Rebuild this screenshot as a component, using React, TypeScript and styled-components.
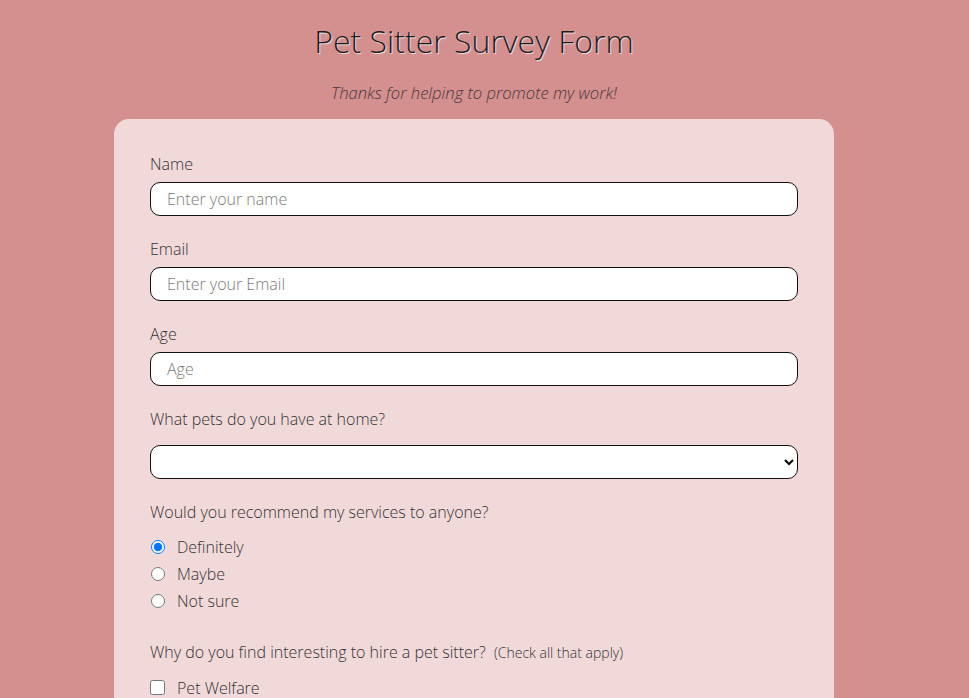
import React from "react";
import styled, { createGlobalStyle } from "styled-components";

const Global = createGlobalStyle`
  html, body {
    margin: 0;
    padding: 0;
    background: #d48f8f;
    font-family: "Open Sans", "DejaVu Sans", sans-serif;
    font-weight: 300;
    color: #222;
  }
  * { box-sizing: border-box; }
`;

const Page = styled.div`
  width: 948px;
  display: flex;
  flex-direction: column;
  align-items: center;
  padding-top: 19px;
`;

const Title = styled.h1`
  margin: 0;
  font-size: 32px;
  font-weight: 300;
  line-height: 44px;
  color: #1d1d1d;
  text-shadow: 1px 1px 1px #f4e3e3;
`;

const Subtitle = styled.p`
  margin: 18px 0 15px;
  font-size: 16.6px;
  font-style: italic;
  font-weight: 300;
  line-height: 23px;
  color: #4a3a3b;
`;

const Card = styled.form`
  width: 720px;
  background: #f1d9da;
  border-radius: 15px;
  padding: 34px 36px 40px;
  display: flex;
  flex-direction: column;
`;

const Group = styled.div<{ $gap?: number }>`
  display: flex;
  flex-direction: column;
  margin-bottom: ${(p) => p.$gap ?? 22}px;
`;

const Label = styled.label<{ $space?: number }>`
  font-size: 16px;
  font-weight: 300;
  line-height: 22px;
  color: #333;
  margin-bottom: ${(p) => p.$space ?? 7}px;
`;

const Small = styled.span`
  font-size: 14px;
  margin-left: 4px;
`;

const TextInput = styled.input`
  width: 100%;
  height: 34px;
  border: 1px solid #111;
  border-radius: 10px;
  background: #fff;
  padding: 0 16px;
  font-family: inherit;
  font-weight: 300;
  font-size: 16px;
  color: #222;
  &::placeholder { color: #7a7a7a; }
  outline: none;
`;

const Select = styled.select`
  width: 100%;
  height: 34px;
  border: 1px solid #111;
  border-radius: 10px;
  background: #fff;
  padding: 0 8px;
  font-family: inherit;
  font-size: 16px;
`;

const Option = styled.label`
  display: flex;
  align-items: center;
  height: 27px;
  font-size: 16px;
  font-weight: 300;
  color: #333;
  input {
    margin: 0 12px 0 1px;
    width: 14px;
    height: 14px;
  }
`;

const CheckOption = styled(Option)`
  input {
    width: 15px;
    height: 15px;
    margin: 0 12px 0 0;
  }
`;

export default function App() {
  return (
    <>
      <Global />
      <Page>
        <Title>Pet Sitter Survey Form</Title>
        <Subtitle>Thanks for helping to promote my work!</Subtitle>
        <Card>
          <Group>
            <Label htmlFor="name">Name</Label>
            <TextInput id="name" placeholder="Enter your name" />
          </Group>
          <Group>
            <Label htmlFor="email">Email</Label>
            <TextInput id="email" placeholder="Enter your Email" />
          </Group>
          <Group>
            <Label htmlFor="age">Age</Label>
            <TextInput id="age" placeholder="Age" />
          </Group>
          <Group>
            <Label htmlFor="pets" $space={15}>What pets do you have at home?</Label>
            <Select id="pets" defaultValue="">
              <option value=""></option>
              <option>Dog</option>
              <option>Cat</option>
              <option>Other</option>
            </Select>
          </Group>
          <Group $gap={27}>
            <Label $space={10}>Would you recommend my services to anyone?</Label>
            <Option><input type="radio" name="rec" defaultChecked />Definitely</Option>
            <Option><input type="radio" name="rec" />Maybe</Option>
            <Option><input type="radio" name="rec" />Not sure</Option>
          </Group>
          <Group>
            <Label $space={10}>
              Why do you find interesting to hire a pet sitter? <Small>(Check all that apply)</Small>
            </Label>
            <CheckOption><input type="checkbox" />Pet Welfare</CheckOption>
            <CheckOption><input type="checkbox" />Peace of Mind</CheckOption>
            <CheckOption><input type="checkbox" />Convenience</CheckOption>
          </Group>
        </Card>
      </Page>
    </>
  );
}
